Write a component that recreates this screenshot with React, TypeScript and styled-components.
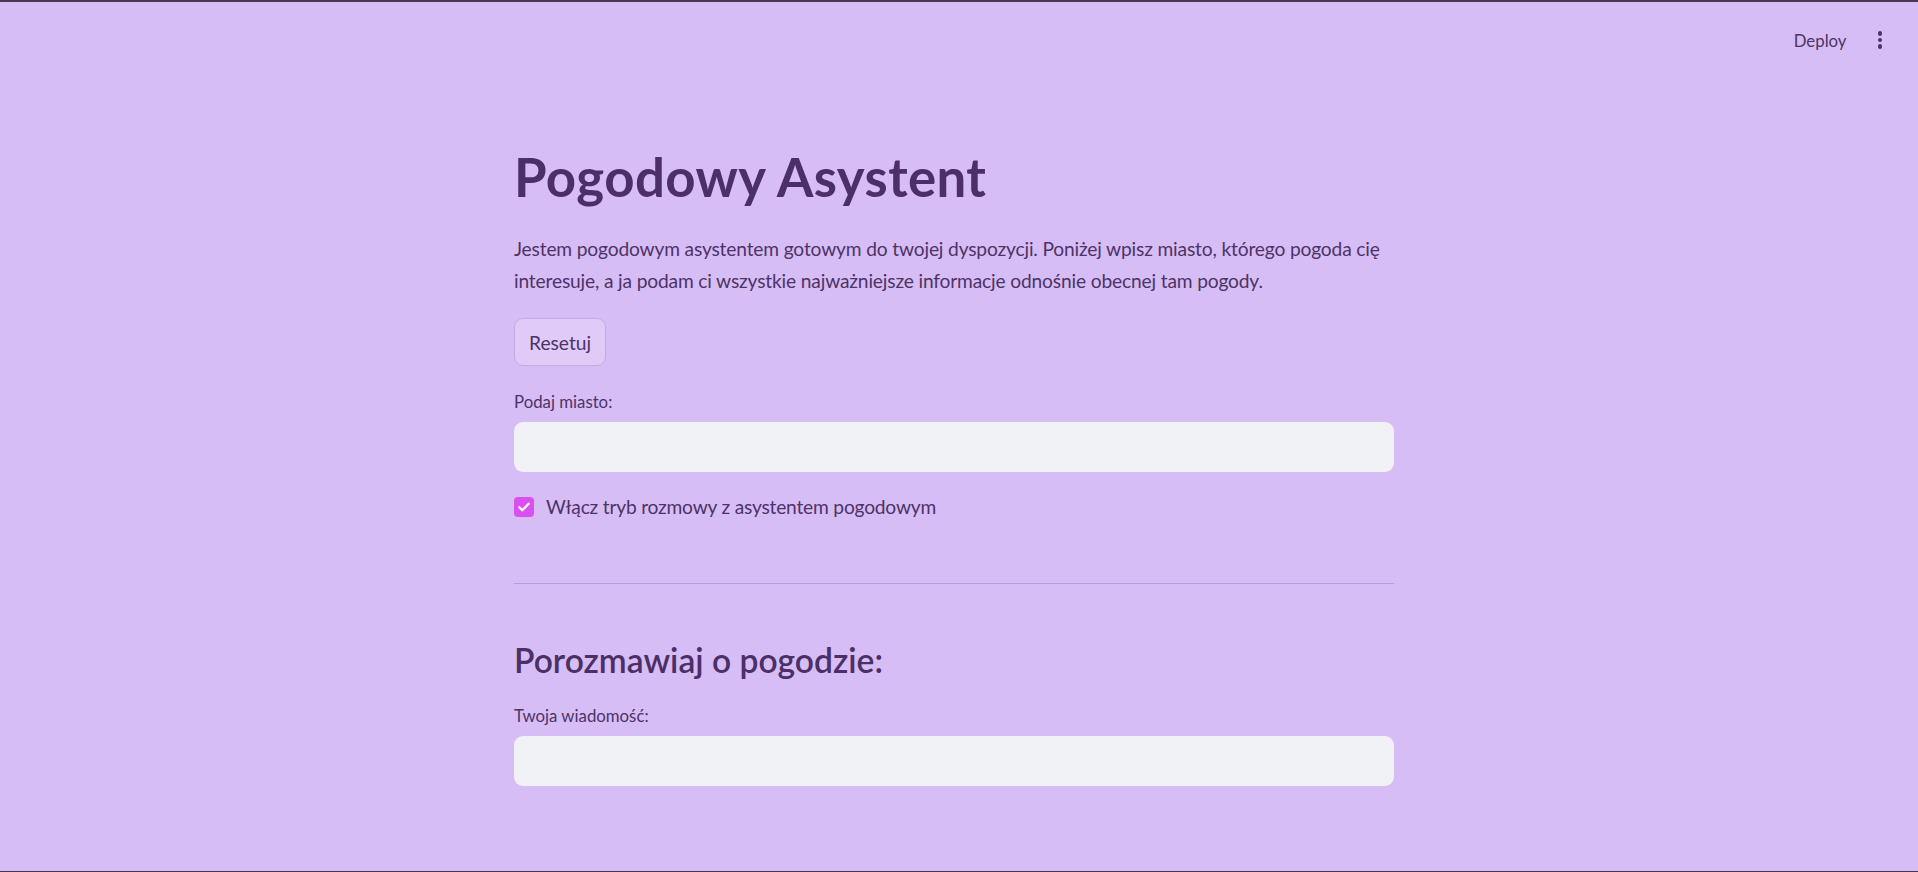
import React from "react";
import styled, { createGlobalStyle } from "styled-components";

const Global = createGlobalStyle`
  html, body { margin: 0; padding: 0; }
  body { background: #d7bdf6; font-family: "Lato", "Noto Sans", sans-serif; color: #4d3366; }
  * { box-sizing: border-box; }
`;

const Page = styled.div`
  height: 872px;
  overflow: hidden;
  background: #d7bdf6;
  border-top: 2px solid #46374f;
  border-bottom: 1px solid #46374f;
  display: flex;
  flex-direction: column;
`;

const Header = styled.header`
  height: 70px;
  display: flex;
  align-items: center;
  justify-content: flex-end;
  padding-right: 36px;
  padding-top: 6px;
  gap: 31px;
`;

const DeployButton = styled.span`
  font-size: 16.8px;
  color: #4d3366;
`;

const MenuDots = styled.span`
  display: flex;
  flex-direction: column;
  gap: 2px;
  & > i {
    display: block;
    width: 4.5px;
    height: 4.5px;
    border-radius: 50%;
    background: #4d3366;
  }
`;

const Main = styled.main`
  display: flex;
  justify-content: center;
  padding-right: 10px;
`;

const Column = styled.div`
  width: 880px;
  display: flex;
  flex-direction: column;
  padding-top: 73px;
`;

const Title = styled.h1`
  margin: 0;
  font-size: 52.8px;
  line-height: 64px;
  font-weight: 700;
  letter-spacing: 0.4px;
  color: #4b2f66;
`;

const Paragraph = styled.p`
  margin: 24px 0 0;
  font-size: 19.2px;
  line-height: 32px;
  letter-spacing: -0.16px;
`;

const Button = styled.button`
  align-self: flex-start;
  margin-top: 21px;
  height: 48px;
  padding: 0 14px;
  border: 1px solid #c6abe2;
  border-radius: 9px;
  background: #dfcaf8;
  color: #4d3366;
  font-family: inherit;
  font-size: 19.2px;
`;

const Label = styled.label<{ $gap: number }>`
  display: block;
  margin-top: ${(p) => p.$gap}px;
  font-size: 16.8px;
  line-height: 24px;
`;

const TextInput = styled.input<{ $gap?: number }>`
  margin-top: ${(p) => p.$gap ?? 8}px;
  height: 50px;
  width: 100%;
  border: none;
  border-radius: 9px;
  background: #f0f2f6;
  outline: none;
  padding: 0 16px;
  font-family: inherit;
  font-size: 19.2px;
  color: #4d3366;
`;

const CheckRow = styled.div`
  margin-top: 23px;
  height: 24px;
  display: flex;
  align-items: center;
  gap: 12px;
  font-size: 19.2px;
  line-height: 24px;
  letter-spacing: -0.2px;
`;

const CheckBox = styled.span`
  width: 20px;
  height: 20px;
  border-radius: 4px;
  background: #d94ff2;
  display: flex;
  align-items: center;
  justify-content: center;
`;

const Divider = styled.hr`
  margin: 64px 0 0;
  border: none;
  height: 1px;
  background: #b99bd9;
`;

const Subheader = styled.h3`
  margin: 56px 0 0;
  font-size: 33.6px;
  line-height: 40px;
  font-weight: 600;
  color: #4b2f66;
`;

export default function App() {
  return (
    <>
      <Global />
      <Page>
        <Header>
          <DeployButton>Deploy</DeployButton>
          <MenuDots>
            <i />
            <i />
            <i />
          </MenuDots>
        </Header>
        <Main>
          <Column>
            <Title>Pogodowy Asystent</Title>
            <Paragraph>
              Jestem pogodowym asystentem gotowym do twojej dyspozycji. Poniżej wpisz miasto, którego pogoda cię
              interesuje, a ja podam ci wszystkie najważniejsze informacje odnośnie obecnej tam pogody.
            </Paragraph>
            <Button>Resetuj</Button>
            <Label $gap={24}>Podaj miasto:</Label>
            <TextInput />
            <CheckRow>
              <CheckBox>
                <svg width="14" height="14" viewBox="0 0 24 24" fill="none" stroke="#fff" strokeWidth="4" strokeLinecap="round" strokeLinejoin="round">
                  <path d="M4 12.5l5 5L20 6.5" />
                </svg>
              </CheckBox>
              Włącz tryb rozmowy z asystentem pogodowym
            </CheckRow>
            <Divider />
            <Subheader>Porozmawiaj o pogodzie:</Subheader>
            <Label $gap={24}>Twoja wiadomość:</Label>
            <TextInput $gap={8} />
          </Column>
        </Main>
      </Page>
    </>
  );
}
